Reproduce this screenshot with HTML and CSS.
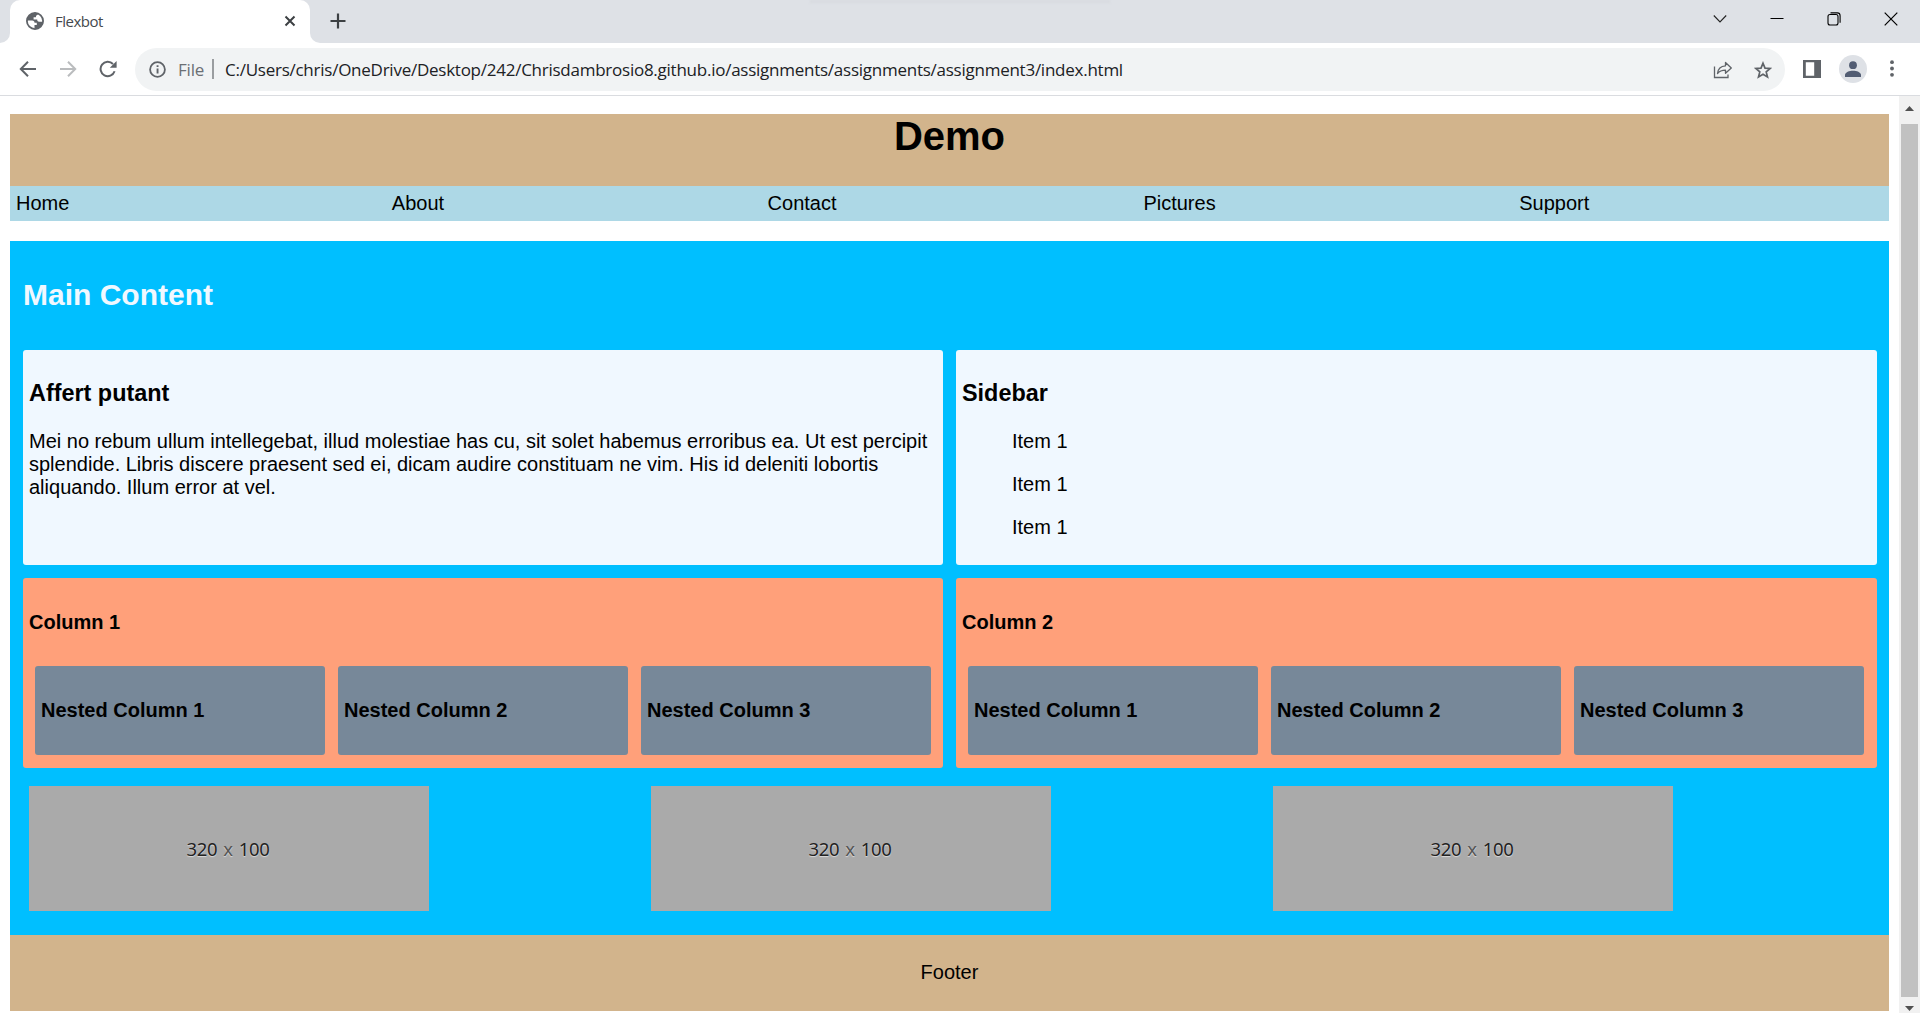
FILE: index.html
```html
<!DOCTYPE html>
<html lang="en">
<head>
<meta charset="utf-8">
<title>Flexbot</title>
<link rel="stylesheet" href="styles.css">
</head>
<body>
<div class="browser">
  <div class="tabstrip">
    <div class="strip-edge"></div>
    <div class="tab">
      <svg class="globe" width="18" height="18" viewBox="0 0 18 18"><circle cx="9" cy="9" r="8.1" fill="#fff" stroke="#5f6368" stroke-width="1.8"/><path fill="#5f6368" d="M9 1C4 1 1 4.500 1 8.500h5.200c1.600 0 2.300 1 2.300 2.200h2.300v2.400H8.500v3.900c4.500 0 8-3 8.400-7.200h-3.700c-1.700 0-2-1.200-2-2.300H7.600V5.200h2.300c0-1.800 1.200-2.200 2.500-2.900C11.300 1.300 10 1 9 1z"/></svg>
      <span class="tab-title">Flexbot</span>
      <svg class="tab-close" width="12" height="12" viewBox="0 0 12 12"><path d="M1.500 1.500l9 9M10.500 1.500l-9 9" stroke="#3c4043" stroke-width="2"/></svg>
    </div>
    <div class="strip-rest">
      <svg class="plus" width="16" height="16" viewBox="0 0 16 16"><path d="M8 .5v15M.5 8h15" stroke="#3c4043" stroke-width="2.2"/></svg>
      <div class="window-buttons">
        <svg width="14" height="14" viewBox="0 0 14 14"><path d="M.8 3.500L7 10l6.200-6.500" fill="none" stroke="#222" stroke-width="1.100"/></svg>
        <svg width="14" height="14" viewBox="0 0 14 14"><path d="M.5 6.500h13" stroke="#000"/></svg>
        <svg width="14" height="14" viewBox="0 0 14 14"><rect x="1" y="2.500" width="10" height="10.500" rx="2" fill="none" stroke="#000" stroke-width="1.100"/><path d="M3.500 .9h6.800a2.800 2.800 0 0 1 2.800 2.800v7" fill="none" stroke="#000" stroke-width="1.100"/></svg>
        <svg width="14" height="14" viewBox="0 0 14 14"><path d="M.7.7l12.600 12.600M13.300.7L.7 13.300" stroke="#000" stroke-width="1.200"/></svg>
      </div>
      <div class="top-shadow"></div>
    </div>
  </div>
  <div class="toolbar">
    <svg class="back" width="18" height="18" viewBox="0 0 18 18"><path d="M17 9H2.500M9 1.800L1.800 9 9 16.200" fill="none" stroke="#5f6368" stroke-width="2"/></svg>
    <svg class="forward" width="18" height="18" viewBox="0 0 18 18"><path d="M1 9h14.500M9 1.800L16.200 9 9 16.200" fill="none" stroke="#babcbe" stroke-width="2"/></svg>
    <svg class="reload" width="18" height="18" viewBox="0 0 18 18"><path d="M15.600 11.300A7.200 7.200 0 1 1 14 4" fill="none" stroke="#5f6368" stroke-width="2"/><path d="M17.600 1v6.800h-6.800z" fill="#5f6368"/></svg>
    <div class="omnibox">
      <svg width="17" height="17" viewBox="0 0 17 17"><circle cx="8.500" cy="8.500" r="7.400" fill="none" stroke="#5f6368" stroke-width="1.800"/><path d="M7.600 7.500h1.900v5H7.600zM7.600 4.200h1.900v1.900H7.600z" fill="#5f6368"/></svg>
      <span class="scheme">File</span>
      <span class="divider"></span>
      <span class="url">C:/Users/chris/OneDrive/Desktop/242/Chrisdambrosio8.github.io/assignments/assignments/assignment3/index.html</span>
      <svg class="share" width="20" height="18" viewBox="0 0 20 18"><path d="M1.500 5.500v11h13.500v-3" fill="none" stroke="#5f6368" stroke-width="1.300"/><path d="M4.500 12.500c.5-5 3.500-7.500 8-7.700V1.500L18.300 7l-5.800 5.300V9.200c-3.700 0-6 .8-8 3.300z" fill="none" stroke="#5f6368" stroke-width="1.300" stroke-linejoin="round"/></svg>
      <svg class="star" width="18" height="18" viewBox="0 0 18 18"><path d="M9 2.200l2 4.900 5.200.4-4 3.400 1.300 5.100L9 13.200 4.500 16l1.300-5.100-4-3.400 5.200-.4z" fill="none" stroke="#5f6368" stroke-width="1.700"/></svg>
    </div>
    <svg class="panel" width="18" height="18" viewBox="0 0 18 18"><path fill="#5f6368" fill-rule="evenodd" d="M0 0h18v18H0zM2.800 2.300v13.400H11.200V2.300z"/></svg>
    <svg class="avatar" width="28" height="28" viewBox="0 0 28 28"><circle cx="14" cy="14" r="14" fill="#dee1e6"/><circle cx="14" cy="10.200" r="3.900" fill="#525d73"/><path d="M6 22v-2c0-2.800 4.500-4.300 8-4.300s8 1.500 8 4.300v2z" fill="#525d73"/></svg>
    <svg class="dots" width="4" height="17" viewBox="0 0 4 17"><g fill="#5f6368"><circle cx="2" cy="2.200" r="1.900"/><circle cx="2" cy="8.500" r="1.900"/><circle cx="2" cy="14.800" r="1.900"/></g></svg>
  </div>
  <div class="viewport">
    <div class="page">
      <header class="header"><h1>Demo</h1></header>
      <nav class="nav"><span>Home</span><span>About</span><span>Contact</span><span>Pictures</span><span>Support</span></nav>
      <main class="main">
        <h2>Main Content</h2>
        <div class="row">
          <section class="card"><h3>Affert putant</h3><p>Mei no rebum ullum intellegebat, illud molestiae has cu, sit solet habemus erroribus ea. Ut est percipit splendide. Libris discere praesent sed ei, dicam audire constituam ne vim. His id deleniti lobortis aliquando. Illum error at vel.</p></section>
          <section class="card"><h3>Sidebar</h3><ul><li>Item 1</li><li>Item 1</li><li>Item 1</li></ul></section>
        </div>
        <div class="row columns">
          <section class="column"><h4>Column 1</h4><div class="nested"><h4>Nested Column 1</h4><h4>Nested Column 2</h4><h4>Nested Column 3</h4></div></section>
          <section class="column"><h4>Column 2</h4><div class="nested"><h4>Nested Column 1</h4><h4>Nested Column 2</h4><h4>Nested Column 3</h4></div></section>
        </div>
        <div class="pictures">
          <div class="picture"><span>320</span><span class="by">x</span><span>100</span></div>
          <div class="picture"><span>320</span><span class="by">x</span><span>100</span></div>
          <div class="picture"><span>320</span><span class="by">x</span><span>100</span></div>
        </div>
      </main>
      <footer class="footer">Footer</footer>
    </div>
    <div class="scrollbar">
      <svg width="9" height="5" viewBox="0 0 9 5"><path d="M0 5L4.500 0 9 5z" fill="#505050"/></svg>
      <div class="thumb"></div>
      <svg width="9" height="5" viewBox="0 0 9 5"><path d="M0 0l4.500 5L9 0z" fill="#505050"/></svg>
    </div>
  </div>
</div>
</body>
</html>
```
FILE: styles.css
```css
* { box-sizing: border-box; }
body { margin: 0; background: #fff; font: 20px/23px "Liberation Sans", Arial, sans-serif; color: #000; overflow: hidden; }
svg { display: block; flex: none; }
h1, h2, h3, h4, p, ul { margin: 0; padding: 0; }

.browser { display: flex; flex-direction: column; height: 1013px; }
.tabstrip { display: flex; height: 43px; background: #fff; font-family: "Open Sans", "Noto Sans", sans-serif; }
.strip-edge { width: 10px; background: #dee1e6; border-bottom-right-radius: 10px; }
.tab { display: flex; align-items: center; width: 300px; padding: 0 14px 1px 16px; background: linear-gradient(#dee1e6, #dee1e6) top / 100% 12px no-repeat; position: relative; z-index: 0; }
.tab::before { content: ""; position: absolute; inset: 0; z-index: -1; background: #fff; border-radius: 10px 10px 0 0; }
.tab-title { flex: 1; margin-left: 11px; font-size: 15px; letter-spacing: -0.5px; color: #45494d; }
.strip-rest { display: flex; flex: 1; align-items: center; justify-content: space-between; padding: 0 22px 0 20px; background: #dee1e6; border-bottom-left-radius: 10px; position: relative; }
.plus { margin-bottom: 1px; }
.window-buttons { display: flex; gap: 43px; margin-bottom: 6px; }
.top-shadow { position: absolute; left: 500px; top: 0; width: 300px; height: 3px; background: #d8dbe0; filter: blur(1px); }

.toolbar { display: flex; align-items: center; height: 53px; padding-bottom: 1px; padding-left: 19px; border-bottom: 1px solid #dadce0; font-family: "Open Sans", "Noto Sans", sans-serif; }
.forward { margin-left: 22px; }
.reload { margin-left: 22px; }
.omnibox { display: flex; align-items: center; width: 1650px; height: 43px; margin: 2px 0 0 18px; padding-left: 14px; border-radius: 22px; background: #f1f3f4; }
.scheme { width: 27px; margin-left: 12px; font-size: 17px; letter-spacing: -0.2px; color: #6b6f74; white-space: nowrap; }
.divider { width: 2px; height: 20px; margin: 0 0 1px 7px; background: #9a9da0; }
.url { flex: 1; margin-left: 11px; font-size: 17px; letter-spacing: -0.25px; color: #202124; white-space: nowrap; }
.share { margin-right: 21px; }
.star { margin-right: 13px; }
.panel { margin-left: 18px; }
.avatar { margin-left: 18px; }
.dots { margin-left: 23px; }

.viewport { display: flex; flex: 1; min-height: 0; }
.page { flex: 1; min-width: 0; padding: 18px 10px 0; }
.header { height: 72px; background: tan; text-align: center; }
h1 { font-size: 40px; line-height: 45px; }
.nav { display: grid; grid-template-columns: repeat(5, 1fr); height: 35px; padding-top: 6px; background: lightblue; }
.nav span { padding-left: 6px; }
.main { height: 694px; margin-top: 20px; padding: 37px 12px 0 13px; background: deepskyblue; }
h2 { height: 72px; font-size: 30px; line-height: 34px; color: aliceblue; }
.row { display: grid; grid-template-columns: 920px 1fr; gap: 13px; }
.card { height: 215px; padding: 30px 6px 0; border-radius: 3px; background: aliceblue; }
h3 { font-size: 23.4px; line-height: 27px; }
.card p { margin-top: 23px; }
.card ul { display: grid; gap: 20px; margin-top: 23px; padding-left: 50px; list-style: none; }
.columns { margin-top: 13px; }
.column { height: 190px; padding: 33px 12px 0; border-radius: 3px; background: lightsalmon; }
h4 { font-size: 20px; line-height: 23px; }
.column > h4 { margin-left: -6px; }
.nested { display: grid; grid-template-columns: repeat(3, 290px); gap: 13px; margin-top: 32px; }
.nested h4 { height: 89px; padding: 33px 6px; border-radius: 3px; background: lightslategray; }
.pictures { display: grid; grid-template-columns: repeat(3, 622px); margin: 18px 0 0 6px; }
.picture { display: flex; align-items: center; justify-content: center; gap: 6px; width: 400px; height: 125px; padding-right: 2px; background: #aaa; color: #222; font-family: "Noto Sans", sans-serif; font-size: 18.500px; letter-spacing: -0.3px; text-shadow: 0 1px 1px #ddd; }
.by { color: #555; }
.footer { height: 76px; padding-top: 26px; background: tan; text-align: center; }

.scrollbar { display: flex; flex: none; flex-direction: column; align-items: center; width: 21px; padding: 10px 0 3px; background: #f1f1f1; }
.thumb { flex: none; width: 17px; height: 873px; margin: 13px 0 9px; background: #c1c1c1; }
```
